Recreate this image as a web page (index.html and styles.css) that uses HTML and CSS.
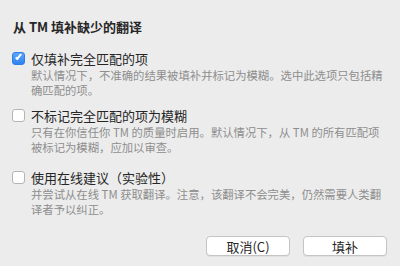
FILE: index.html
```html
<!DOCTYPE html>
<html lang="zh-CN">

<head>
    <meta charset="UTF-8">
    <meta name="viewport" content="width=device-width, initial-scale=1.0">
    <title>从 TM 填补缺少的翻译</title>
    <link rel="stylesheet" href="styles.css">
</head>

<body>

    <div class="dialog">
        <h1 class="dialog__title">从 TM 填补缺少的翻译</h1>

        <div class="options">
            <label class="option">
                <span class="option__row">
                    <input type="checkbox" class="option__check" checked>
                    <span class="option__label">仅填补完全匹配的项</span>
                </span>
                <span class="option__desc">默认情况下，不准确的结果被填补并标记为模糊。选中此选项只包括精<br>确匹配的项。</span>
            </label>

            <label class="option">
                <span class="option__row">
                    <input type="checkbox" class="option__check">
                    <span class="option__label">不标记完全匹配的项为模糊</span>
                </span>
                <span class="option__desc">只有在你信任你 TM 的质量时启用。默认情况下，从 TM 的所有匹配项<br>被标记为模糊，应加以审查。</span>
            </label>

            <label class="option option--last">
                <span class="option__row">
                    <input type="checkbox" class="option__check">
                    <span class="option__label">使用在线建议（实验性）</span>
                </span>
                <span class="option__desc">并尝试从在线 TM 获取翻译。注意，该翻译不会完美，仍然需要人类翻<br>译者予以纠正。</span>
            </label>
        </div>

        <div class="dialog__buttons">
            <button class="dialog__button">取消(C)</button>
            <button class="dialog__button">填补</button>
        </div>
    </div>

</body>

</html>
```

FILE: styles.css
```css
html {
    box-sizing: border-box;
    background: #ececec;
}

*,
*:before,
*:after {
    box-sizing: inherit;
}

body {
    margin: 0;
    font-family: "Noto Sans CJK SC", "Noto Sans", sans-serif;
    color: #262626;
}

.dialog {
    display: flex;
    flex-direction: column;
    height: 266px;
    padding: 19px 13px 10px 12px;
}

.dialog__title {
    margin: 0;
    font-size: 13px;
    line-height: 16px;
    font-weight: bold;
    padding-left: 1px;
}

.options {
    display: flex;
    flex-direction: column;
    margin-top: 16px;
}

.option {
    display: flex;
    flex-direction: column;
    margin-bottom: 10px;
}

.option--last {
    margin-top: 5px;
}

.option__row {
    display: flex;
    align-items: center;
    height: 16px;
}

.option__check {
    appearance: none;
    -webkit-appearance: none;
    margin: 0 6px 0 0;
    width: 13px;
    height: 13px;
    border: 1px solid #b5b5b5;
    border-radius: 3px;
    background: #fff;
    position: relative;
    top: -1px;
}

.option__check:checked {
    border-color: #2f7fe8;
    background: linear-gradient(#5aa6fb, #2f84f0);
}

.option__check:checked:after {
    content: "";
    position: absolute;
    left: 3.5px;
    top: 0.5px;
    width: 3px;
    height: 7px;
    border: solid #fff;
    border-width: 0 2px 2px 0;
    transform: rotate(40deg);
}

.option__label {
    font-size: 13px;
    line-height: 16px;
}

.option__desc {
    margin-top: 1px;
    padding-left: 19px;
    font-size: 11.35px;
    line-height: 15px;
    color: #8e8e8e;
    white-space: nowrap;
}

.dialog__buttons {
    display: flex;
    justify-content: flex-end;
    gap: 13px;
    margin-top: auto;
}

.dialog__button {
    width: 84px;
    height: 20px;
    padding: 0;
    border: 1px solid #c4c4c4;
    border-radius: 4px;
    background: #fff;
    box-shadow: 0 1px 0 rgba(0, 0, 0, 0.05);
    font-family: "Noto Sans CJK SC", "Noto Sans", sans-serif;
    font-size: 13px;
    color: #262626;
}
```
